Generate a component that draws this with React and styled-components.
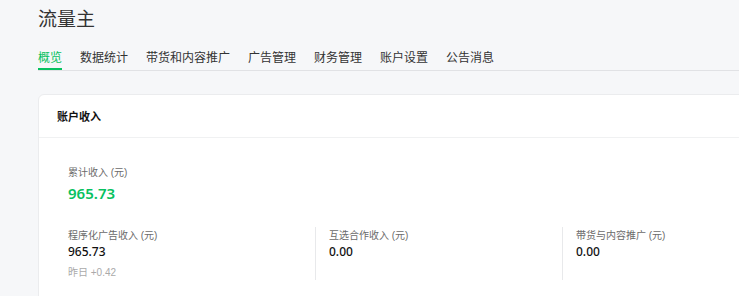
import styled, { createGlobalStyle } from 'styled-components';

const GlobalStyle = createGlobalStyle`
  html, body {
    margin: 0;
    padding: 0;
    background: #f6f7f9;
    overflow: hidden;
  }
  body {
    font-family: "Liberation Sans", "Noto Sans CJK SC", sans-serif;
    color: #333;
  }
`;

const Page = styled.div`
  width: 820px;
  padding-left: 38px;
`;

const Title = styled.h1`
  margin: 6px 0 0;
  font-size: 19px;
  line-height: 28px;
  font-weight: 400;
  color: #333;
`;

const Tabs = styled.nav`
  display: flex;
  gap: 18px;
  margin-top: 14px;
  border-bottom: 1px solid #e1e2e5;
`;

const Tab = styled.div`
  font-size: 12px;
  line-height: 20px;
  color: ${(p) => (p.$active ? '#07c160' : '#333')};
  border-bottom: 2px solid ${(p) => (p.$active ? '#07c160' : 'transparent')};
  cursor: pointer;
`;

const Card = styled.section`
  margin-top: 23px;
  background: #fff;
  border: 1px solid #ebecee;
  border-radius: 6px;
`;

const CardHeader = styled.div`
  height: 42px;
  display: flex;
  align-items: center;
  padding-left: 18px;
  border-bottom: 1px solid #f0f1f2;
  font-size: 11px;
  font-weight: 700;
  color: #111;
`;

const CardBody = styled.div`
  padding: 28px 0 40px 29px;
`;

const Label = styled.div`
  font-size: 10px;
  line-height: 14px;
  color: #6b6b6b;
`;

const Total = styled.div`
  margin-top: 3px;
  font-family: "Noto Sans", "Noto Sans CJK SC", sans-serif;
  font-size: 15px;
  line-height: 20px;
  font-weight: 600;
  color: #07c160;
`;

const Stats = styled.div`
  display: grid;
  grid-template-columns: 247px 247px 247px;
  margin-top: 24px;
`;

const Stat = styled.div`
  padding: 2px 0 0 ${(p) => (p.$first ? '0' : '13px')};
  border-left: ${(p) => (p.$first ? 'none' : '1px solid #e8e9eb')};
  min-height: 49px;
`;

const Value = styled.div`
  font-family: "Noto Sans", "Noto Sans CJK SC", sans-serif;
  font-size: 12px;
  line-height: 18px;
  font-weight: 500;
  color: #111;
`;

const Sub = styled.div`
  margin-top: 5px;
  font-size: 10px;
  line-height: 14px;
  color: #aaa;
`;

const tabs = ['概览', '数据统计', '带货和内容推广', '广告管理', '财务管理', '账户设置', '公告消息'];

const stats = [
  { label: '程序化广告收入 (元)', value: '965.73', sub: '昨日 +0.42' },
  { label: '互选合作收入 (元)', value: '0.00' },
  { label: '带货与内容推广 (元)', value: '0.00' },
];

export default function App() {
  return (
    <Page>
      <GlobalStyle />
      <Title>流量主</Title>
      <Tabs>
        {tabs.map((t, i) => (
          <Tab key={t} $active={i === 0}>
            {t}
          </Tab>
        ))}
      </Tabs>
      <Card>
        <CardHeader>账户收入</CardHeader>
        <CardBody>
          <Label>累计收入 (元)</Label>
          <Total>965.73</Total>
          <Stats>
            {stats.map((s, i) => (
              <Stat key={s.label} $first={i === 0}>
                <Label>{s.label}</Label>
                <Value>{s.value}</Value>
                {s.sub && <Sub>{s.sub}</Sub>}
              </Stat>
            ))}
          </Stats>
        </CardBody>
      </Card>
    </Page>
  );
}
